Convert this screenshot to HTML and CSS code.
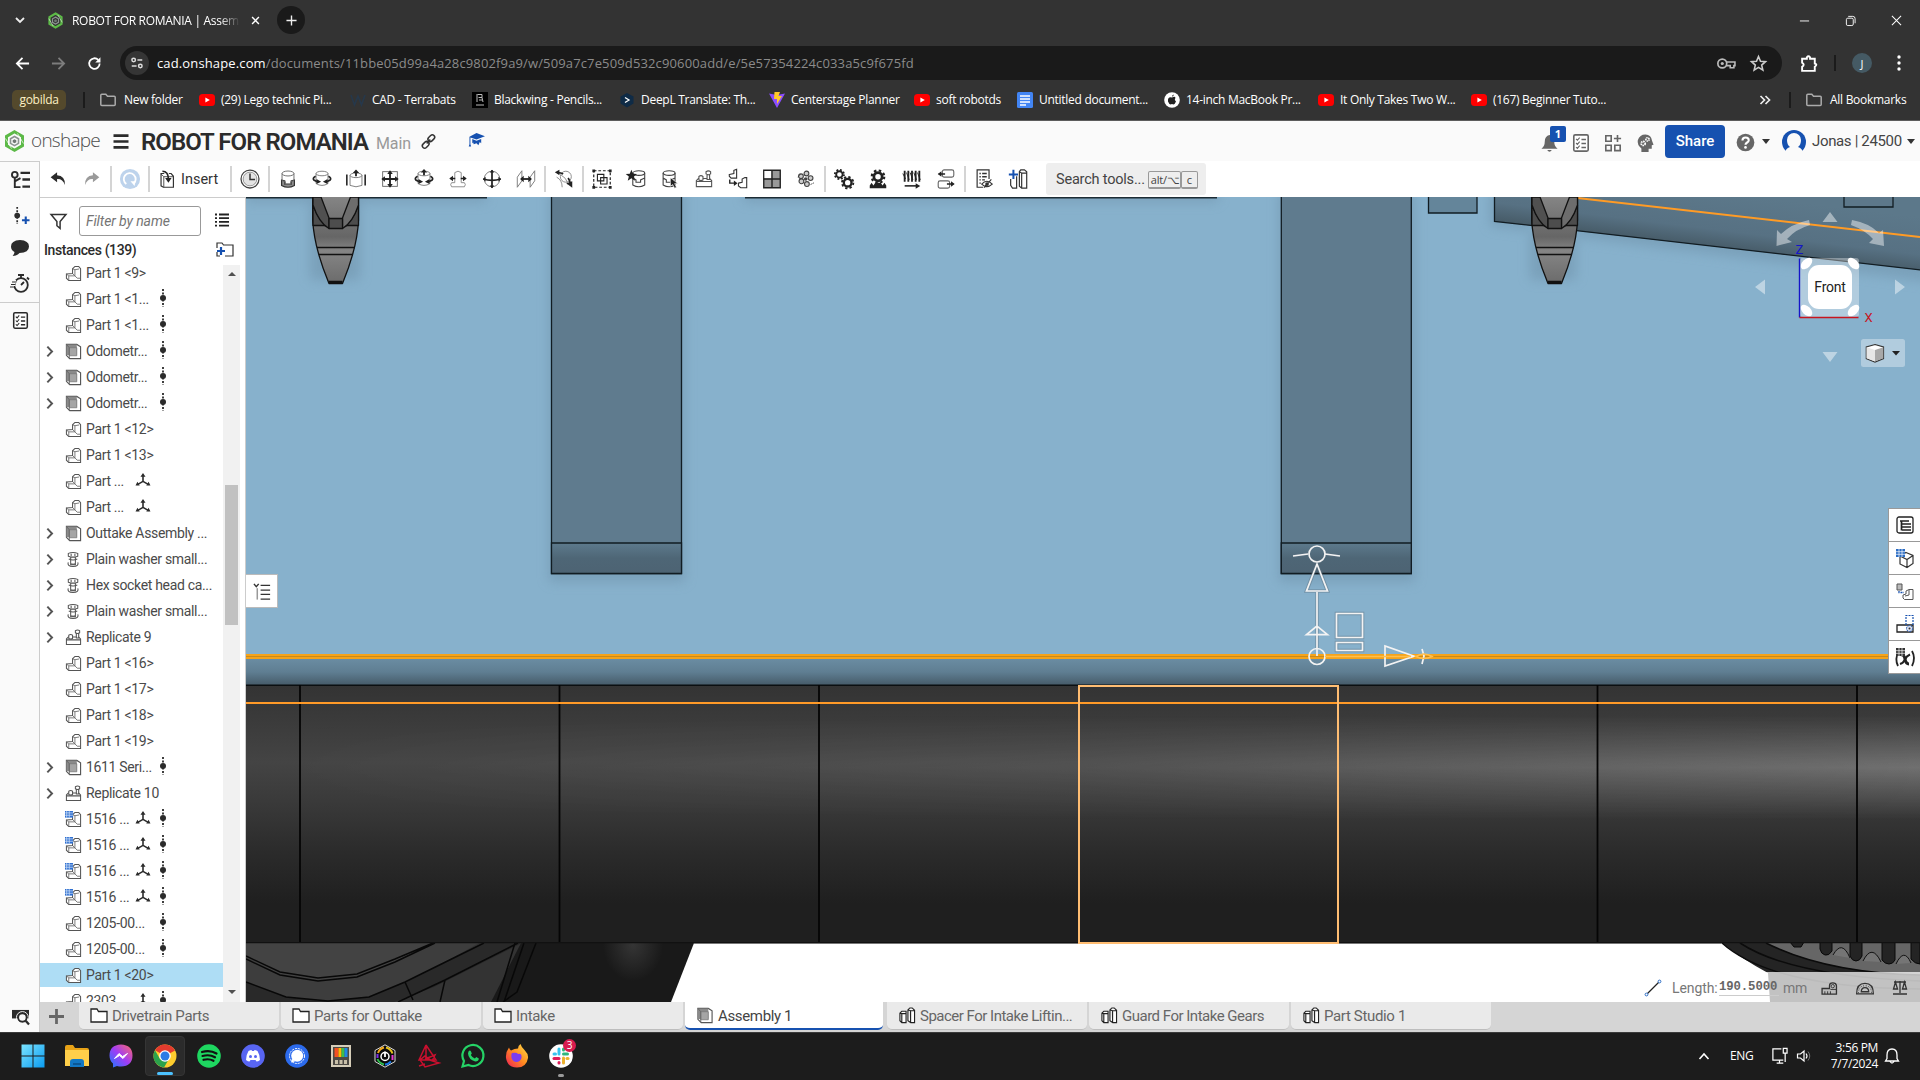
FILE: index.html
```html
<!DOCTYPE html>
<html lang="en">
<head>
<meta charset="utf-8">
<title>ROBOT FOR ROMANIA | Assembly 1</title>
<link rel="stylesheet" href="styles.css">
</head>
<body>
<svg class="defs" aria-hidden="true">
  <linearGradient id="gTube" x1="0" y1="0" x2="0" y2="1"><stop offset="0" stop-color="#333"/><stop offset=".3" stop-color="#444"/><stop offset=".45" stop-color="#3a3a3a"/><stop offset=".65" stop-color="#2b2b2b"/><stop offset=".85" stop-color="#1f1f1f"/><stop offset="1" stop-color="#1f1f1f"/></linearGradient>
  <linearGradient id="gShineY" x1="0" y1="0" x2="0" y2="1"><stop offset="0" stop-color="#fff" stop-opacity="0"/><stop offset=".5" stop-color="#fff" stop-opacity=".24"/><stop offset="1" stop-color="#fff" stop-opacity="0"/></linearGradient>
  <linearGradient id="gShineX" x1="0" y1="0" x2="1" y2="0"><stop offset="0" stop-color="#000"/><stop offset=".5" stop-color="#555"/><stop offset="1" stop-color="#fff"/></linearGradient>
  <linearGradient id="gRail" x1="0" y1="0" x2="0" y2="1"><stop offset="0" stop-color="#6a8ca2"/><stop offset=".5" stop-color="#5f7e92"/><stop offset="1" stop-color="#465b69"/></linearGradient>
  <linearGradient id="gFoot" x1="0" y1="0" x2="0" y2="1"><stop offset="0" stop-color="#5d7a8d"/><stop offset=".5" stop-color="#4e6676"/><stop offset="1" stop-color="#4d6373"/></linearGradient>
  <linearGradient id="gHook" x1="0" y1="0" x2="0" y2="1"><stop offset="0" stop-color="#8a8a8a"/><stop offset=".5" stop-color="#666"/><stop offset=".65" stop-color="#858585"/><stop offset="1" stop-color="#6b6b6b"/></linearGradient>
  <linearGradient id="gBeam" gradientUnits="userSpaceOnUse" x1="1700" y1="190" x2="1693" y2="247"><stop offset="0" stop-color="#5c788a"/><stop offset=".65" stop-color="#577183"/><stop offset="1" stop-color="#455965"/></linearGradient>
  <radialGradient id="gWheel"><stop offset="0" stop-color="#353535"/><stop offset="1" stop-color="#353535" stop-opacity="0"/></radialGradient>
  <linearGradient id="gMsg" x1="0" y1="1" x2="1" y2="0"><stop offset="0" stop-color="#1a7bff"/><stop offset=".5" stop-color="#a03cf5"/><stop offset="1" stop-color="#ff6a6a"/></linearGradient>
  <linearGradient id="gFox" x1="1" y1="0" x2="0" y2="1"><stop offset="0" stop-color="#ffe14a"/><stop offset=".5" stop-color="#ff8a1f"/><stop offset="1" stop-color="#f0195a"/></linearGradient>
  <linearGradient id="gWin" x1="0" y1="0" x2="1" y2="1"><stop offset="0" stop-color="#7be4ff"/><stop offset="1" stop-color="#0a9bf0"/></linearGradient>
  <filter id="soft" x="-20%" y="-20%" width="140%" height="140%"><feGaussianBlur stdDeviation="6"/></filter>
  <mask id="mShine"><rect x="246" y="700" width="1674" height="150" fill="url(#gShineX)"/></mask>

  <symbol id="yt" viewBox="0 0 16 16"><rect y="2" width="16" height="12" rx="3.5" fill="#f00"/><path d="M6.4 5.4v5.2L10.8 8z" fill="#fff"/></symbol>
  <symbol id="fold" viewBox="0 0 16 16"><path d="M.8 3.3q0-1 1-1h4l1.7 2h6.7q1 0 1 1v7.2q0 1-1 1H1.800q-1 0-1-1z" fill="none" stroke="#ababab" stroke-width="1.5"/></symbol>
  <symbol id="oshape" viewBox="0 0 20 22"><path d="M10 1.800 18 6.400v9.200L10 20.200 2 15.600V6.400z" fill="none" stroke="#5cb947" stroke-width="3"/><path d="M10 6.500 14 8.800v4.600L10 15.700 6 13.400V8.800z" fill="none" stroke="#8b9490" stroke-width="1.600"/><path d="M10 9.300l1.800 1v2l-1.800 1-1.800-1v-2z" fill="#6f7774"/><path d="M13 3.500l6 10M7 18.500 1 8.500" stroke="#fff" stroke-width=".7"/></symbol>

  <symbol id="part" viewBox="0 0 18 18"><path d="M1.500 9.500 8 9V4l2.500-2.500h4L16.500 4v12.500H4L1.500 14z" fill="#fff" stroke="#555" stroke-width="1.100"/><path d="M8 4l2.500 1V11.500H4v5M4 11.500 1.500 9.500M10.500 5l4.500-.800M10.500 11.500 13 14h3.500M8 9l2.500 2.500" fill="none" stroke="#666" stroke-width=".9"/></symbol>
  <symbol id="asm" viewBox="0 0 18 18"><path d="M1.500 1.500h11L16.500 4v12.500H5L1.500 13z" fill="#fff" stroke="#555" stroke-width="1.200"/><path d="M1.500 1.500h11v11H5.500L1.500 13z" fill="#8a8a8a"/><path d="M4.500 5h8v8.500h-8z" fill="#a5a5a5" stroke="#777" stroke-width=".8"/><path d="M1.500 1.500 4.500 5v11" fill="none" stroke="#666"/></symbol>
  <symbol id="bolt" viewBox="0 0 18 18"><g fill="#fff" stroke="#555" stroke-width="1.100"><path d="M3.500 2.500q5-2 10 0v3q-5 2-10 0zM6 6.500v8h5v-8M3.500 12q-1.500 4 5 4.500 6.500-.500 5-4.500"/><path d="M4 8.500q4.500 2 9 0M6.500 13.500q2 1 4 0M6.500 3v2.500M10.500 3v2.500" fill="none"/></g></symbol>
  <symbol id="rep" viewBox="0 0 18 18"><g fill="#fff" stroke="#555" stroke-width="1.100"><path d="M1.500 10.500 3.500 8.500h11l2 2v6h-15zM1.500 11.500h15"/><path d="M4 10V6.500q2-1.500 4 0V10q-2 1-4 0zM11 4v-2.200q2.300-1.600 4.500 0V4q-2.200 1.600-4.500 0zM12 5v4.500h2.500V5"/></g></symbol>
  <symbol id="gpart" viewBox="0 0 18 18"><use href="#part"/><rect x="-1" y="-.5" width="9.500" height="7.500" fill="#2f6fd0"/><path d="M1.800 0v7M4.500 0v7M0 2h8.500M0 4.500h8.500" stroke="#cfe0f8" stroke-width=".8"/></symbol>
  <symbol id="chev" viewBox="0 0 9 14"><path d="M1.500 1.500 6.800 7l-5.300 5.500" fill="none" stroke="#555" stroke-width="2.200"/></symbol>
  <symbol id="dots" viewBox="0 0 8 18"><path d="M4 0v18" stroke="#2b2b2b" stroke-width="1.800" stroke-dasharray="2 1.500"/><circle cx="4" cy="9" r="3" fill="#2b2b2b"/></symbol>
  <symbol id="tri" viewBox="0 0 16 15"><path d="M8 2v7M8 9l-6 3.500M8 9l6 3.500" stroke="#2b2b2b" stroke-width="1.700"/><path d="M8 0l2.700 4H5.300zM0 13.500l2-4 2.500 4zM16 13.500l-2-4-2.500 4z" fill="#2b2b2b"/></symbol>
  <symbol id="tfold" viewBox="0 0 18 16"><path d="M1 14.500V1.500h6l1.500 2.500H17v10.500z" fill="#fff" stroke="#222" stroke-width="1.300"/></symbol>
  <symbol id="studio" viewBox="0 0 18 18"><g fill="#fff" stroke="#222" stroke-width="1.200"><path d="M1.500 6.500 3.500 4.500h4.500v12H3.500l-2-2zM3.500 16.500V7l-2-.5M3.500 7h4.500"/><path d="M10 3 12 1h2.500L17 3.500v13h-4l-3-2zM12.800 16V4L10 3M12.800 4H17"/></g></symbol>

  <symbol id="i-undo" viewBox="0 0 24 24"><path d="M11 4.500 4 10l7 5.500V12q6-.5 8.500 6.500Q20 8.500 11 8z" fill="#2b2b2b"/></symbol>
  <symbol id="i-redo" viewBox="0 0 24 24"><path d="M13 4.500 20 10l-7 5.500V12q-6-.5-8.500 6.500Q4 8.500 13 8z" fill="#9a9a9a"/></symbol>
  <symbol id="i-upd" viewBox="0 0 24 24"><circle cx="12" cy="12" r="11" fill="#bdd3ec"/><path d="M8 17.500A6.500 6.500 0 1 1 16 17" fill="none" stroke="#fff" stroke-width="2"/><path d="M12.500 14.500H18l-1 5z" fill="#fff"/></symbol>
  <symbol id="i-ins" viewBox="0 0 24 24"><path d="M9 6H5.500v13.500L8 21h11V9l-2.500-3H14" fill="#fff" stroke="#333" stroke-width="1.300"/><path d="M5.500 6.500 8.500 9.500V21M8.500 9.500H19" fill="none" stroke="#444"/><path d="M7 3.500q6.500 0 6.500 8.500" fill="none" stroke="#222" stroke-width="1.800"/><path d="M10 11h7l-3.500 5z" fill="#222"/></symbol>
  <symbol id="i-clock" viewBox="0 0 24 24"><circle cx="12" cy="12" r="9.800" fill="#fff" stroke="#444" stroke-width="1.400"/><circle cx="12" cy="12" r="7.500" fill="#e4e4e4" stroke="#777" stroke-width=".8"/><path d="M12 6v6.500h5.500" fill="none" stroke="#333" stroke-width="1.600"/></symbol>
  <symbol id="i-fast" viewBox="0 0 24 24"><path d="M5 13v6q7 4 14 0v-6l-3.500 1v3.500h-7V14z" fill="#8d8d8d" stroke="#333" stroke-width="1.300"/><ellipse cx="12" cy="6" rx="6.500" ry="2.700" fill="#fff" stroke="#666"/><path d="M5.500 6v7.500L9 15v3h6v-3l3.500-1.500V6" fill="none" stroke="#666"/></symbol>
  <symbol id="i-rev" viewBox="0 0 24 24"><ellipse cx="12" cy="6" rx="6.500" ry="2.500" fill="#fff" stroke="#777"/><path d="M5.500 6v11q6.500 4 13 0V6" fill="none" stroke="#777"/><path d="M5 9Q1 11 3.500 13.500L7 15M19 9q4 2 1.500 4.500L17 15" fill="none" stroke="#222" stroke-width="1.900"/><path d="M6 12l5 3-5 2.500zM18 12l-5 3 5 2.500z" fill="#222"/></symbol>
  <symbol id="i-sli" viewBox="0 0 24 24"><ellipse cx="12" cy="8" rx="6.500" ry="2.500" fill="#fff" stroke="#777"/><path d="M5.500 8v11q6.500 3 13 0V8" fill="none" stroke="#777"/><path d="M2 7v12M22 7v12" stroke="#222" stroke-width="1.700"/><path d="M12 9V3" stroke="#222" stroke-width="2"/><path d="M8.500 5.500 12 1.500l3.500 4z" fill="#222"/></symbol>
  <symbol id="i-pla" viewBox="0 0 24 24"><rect x="4" y="4" width="16" height="16" fill="#fff" stroke="#666"/><path d="M12 4v16M4 12h16" stroke="#222" stroke-width="2"/><path d="M9 6.500 12 2.500l3 4zM9 17.500l3 4 3-4zM6.500 9 2.500 12l4 3zM17.500 9l4 3-4 3z" fill="#222"/></symbol>
  <symbol id="i-cyl" viewBox="0 0 24 24"><use href="#i-rev"/><path d="M12 8V3" stroke="#222" stroke-width="2"/><path d="M8.500 5 12 1l3.500 4z" fill="#222"/></symbol>
  <symbol id="i-pin" viewBox="0 0 24 24"><path d="M8.500 5q3.500-3 7 0v11h3.500q2 2 0 4.500H5q-2-2.500 0-4.500h3.500z" fill="#fff" stroke="#888"/><path d="M4 11.500h16" stroke="#222" stroke-width="1.700" stroke-dasharray="5 6"/><path d="M6.500 8.500 2.500 11.500l4 3zM17.500 8.500l4 3-4 3z" fill="#222"/></symbol>
  <symbol id="i-ball" viewBox="0 0 24 24"><circle cx="12" cy="12" r="8.500" fill="#fff" stroke="#777"/><path d="M12 2.500v19M2.500 12q9.500 3 19 0" fill="none" stroke="#222" stroke-width="1.900"/><path d="M9.500 5 12 2l2.500 3zM9.500 19l2.500 3 2.500-3zM5 9.500 2 12l3 3zM19 9.500l3 2.500-3 3z" fill="#222"/></symbol>
  <symbol id="i-par" viewBox="0 0 24 24"><path d="M2.500 21V10l5-7v11zM16.500 21V10l5-7v11z" fill="#fff" stroke="#777"/><path d="M7 12h10" stroke="#222" stroke-width="2"/><path d="M9.500 8.500 5.500 12l4 3.500zM14.500 8.500l4 3.500-4 3.500z" fill="#222"/></symbol>
  <symbol id="i-tan" viewBox="0 0 24 24"><circle cx="14" cy="9.500" r="6" fill="#fff" stroke="#888"/><path d="M4 10q6 3 6 11M9 8q6 3 7 10" fill="none" stroke="#888"/><path d="M5 5q4 0 6 1.500M16.500 11q2 3 2.500 6" fill="none" stroke="#222" stroke-width="1.900"/><path d="M7 2 2 4.500 7 8zM14.500 16.500l6.500 5v-7z" fill="#222"/></symbol>
  <symbol id="i-grp" viewBox="0 0 24 24"><rect x="3" y="3" width="18" height="18" fill="none" stroke="#222" stroke-width="1.300" stroke-dasharray="3 2"/><path d="M1.500 1.500h3v3h-3zM19.500 1.500h3v3h-3zM1.500 19.500h3v3h-3zM19.500 19.500h3v3h-3z" fill="#222"/><path d="M7 7h7v7H7zM10.500 10.500h7v7h-7z" fill="none" stroke="#222" stroke-width="1.200"/></symbol>
  <symbol id="i-db" viewBox="0 0 24 24"><ellipse cx="12" cy="5.500" rx="6.500" ry="2.500" fill="#fff" stroke="#444" stroke-width="1.200"/><path d="M5.500 5.500v13q6.500 4 13 0v-13M5.500 11l3.500 2v2.500h5V13l4.500-2" fill="none" stroke="#444" stroke-width="1.200"/></symbol>
  <symbol id="i-star" viewBox="0 0 24 24"><use href="#i-db" x="3"/><path d="M7 2l1.800 4.300 4.400.2-3.400 2.900 1.200 4.400L7 11.300l-4 2.500 1.200-4.400L.8 6.500l4.400-.2z" fill="#222"/></symbol>
  <symbol id="i-dbc" viewBox="0 0 24 24"><use href="#i-db" x="-1"/><path d="M12.500 10.500v9.500l2.500-2 2 4 2-1-2-4h3.500z" fill="#222" stroke="#fff" stroke-width=".6"/></symbol>
  <symbol id="i-rep" viewBox="0 0 24 24"><use href="#rep" x="2" y="2" width="20" height="20"/></symbol>
  <symbol id="i-inst" viewBox="0 0 24 24"><path d="M2.500 7l5-1V2.500l3-1v9.500H4.500L2.500 9zM12.500 16.500l4-1V12l3-1.500h2v11H15l-2.500-2z" fill="#fff" stroke="#333" stroke-width="1.200"/><path d="M3 12.500v4h5" fill="none" stroke="#222" stroke-width="1.500"/><path d="M7.500 13.500l4 3-4 3z" fill="#222"/></symbol>
  <symbol id="i-pat" viewBox="0 0 24 24"><path d="M3 2.500h18v19H3z" fill="#999" stroke="#222" stroke-width="1.500"/><path d="M3.800 3.300h7.500v8H3.800z" fill="#fff"/><path d="M12 2.500v19M3 12h18" stroke="#222" stroke-width="1.500"/></symbol>
  <symbol id="i-circ" viewBox="0 0 24 24"><g fill="#ccc" stroke="#444" stroke-width="1.200"><circle cx="6.500" cy="9" r="2.600"/><circle cx="12.500" cy="6" r="2.600"/><circle cx="7" cy="14.500" r="2.600"/><circle cx="13" cy="17.500" r="2.600"/><circle cx="17" cy="11" r="2.600"/></g><circle cx="11.700" cy="12" r="2" fill="#444"/><path d="M17 18l4-2M3 10l3-3" stroke="#333" stroke-dasharray="1.500 1"/></symbol>
  <symbol id="i-gear" viewBox="0 0 24 24"><circle cx="7" cy="7" r="3.500" fill="none" stroke="#222" stroke-width="2"/><circle cx="7" cy="7" r="5" fill="none" stroke="#222" stroke-width="2" stroke-dasharray="2 1.927"/><circle cx="16" cy="16" r="4.200" fill="none" stroke="#222" stroke-width="2.600"/><circle cx="16" cy="16" r="6.200" fill="none" stroke="#222" stroke-width="2" stroke-dasharray="2.500 2.370"/></symbol>
  <symbol id="i-rack" viewBox="0 0 24 24"><circle cx="12" cy="9.500" r="4.500" fill="none" stroke="#222" stroke-width="3"/><circle cx="12" cy="9.500" r="6.800" fill="none" stroke="#222" stroke-width="2.400" stroke-dasharray="2.700 2.640"/><path d="M3 22v-3l2-3 2 3 2-3h6l2 3 2-3 2 3v3z" fill="#222"/></symbol>
  <symbol id="i-screw" viewBox="0 0 24 24"><path d="M4 3v12M8 3v12M12 3v12M16 3v12M20 3v12" stroke="#222" stroke-width="2"/><path d="M2 6l3 6M6 5l3 8M10 5l3 8M14 5l3 8M18 5l3 8" stroke="#222"/><path d="M4 19.500h13" stroke="#222" stroke-width="1.700"/><path d="M16 16.500l5 3-5 3z" fill="#222"/></symbol>
  <symbol id="i-lin" viewBox="0 0 24 24"><g fill="#fff" stroke="#666" stroke-width="1.200"><rect x="8" y="2" width="12.500" height="8" rx="2"/><rect x="3.500" y="14" width="12.500" height="8" rx="2"/></g><path d="M4 6.500h7M13 17.500h7" stroke="#222" stroke-width="1.700"/><path d="M7 3.500 3 6.500l4 3zM17.500 14.500l4 3-4 3z" fill="#222"/></symbol>
  <symbol id="i-hide" viewBox="0 0 24 24"><path d="M17.500 12V2h-13v19H11" fill="#fff" stroke="#333" stroke-width="1.300"/><path d="M7 6h1.500M10 6h5M7 9.500h1.500M10 9.500h5M7 13h1.500M10 13h3M7 16.500h1.500" stroke="#333" stroke-width="1.500"/><path d="M9.500 17.500q5.500-6 11.500 0-6 5.500-11.500 0zM12 21.500l8-9" fill="#fff" stroke="#333" stroke-width="1.200"/><circle cx="15.300" cy="17.500" r="2" fill="#333"/></symbol>
  <symbol id="i-addst" viewBox="0 0 24 24"><path d="M4 12v7l2 3h4.500V9M13.500 4 15 2h4l2.500 2v18H16l-2.500-2zM16 22V5.500L13.500 4M16 5.500h5.500" fill="#fff" stroke="#333" stroke-width="1.300"/><path d="M7 2v10M2 7h10" stroke="#1651b0" stroke-width="2.200"/></symbol>
  <symbol id="i-list" viewBox="0 0 20 22"><rect x="2" y="2" width="16" height="18" rx="1.500" fill="#fff" stroke="currentColor" stroke-width="1.800"/><path d="M4.500 6.500 6 8l2.500-3M4.500 11 6 12.500 8.500 9.500M4.500 15.500 6 17l2.500-3" fill="none" stroke="currentColor" stroke-width="1.200"/><path d="M10.500 7h5M10.500 11.500h5M10.500 16h5" stroke="currentColor" stroke-width="1.700"/></symbol>
</svg>

<div class="screen">
  <header class="chrome">
    <div class="tabstrip">
      <svg class="caretdown" viewBox="0 0 10 10"><path d="M1 3l4 4 4-4" fill="none" stroke="#eee" stroke-width="1.800"/></svg>
      <svg class="favicon"><use href="#oshape"/></svg>
      <span class="tabtitle">ROBOT FOR ROMANIA | Assembly 1</span>
      <svg class="x" viewBox="0 0 10 10"><path d="M1.200 1.200l7.600 7.600M8.800 1.200 1.200 8.800" stroke="#fff" stroke-width="1.600"/></svg>
      <span class="newtab"><svg viewBox="0 0 12 12"><path d="M6 .5v11M.5 6h11" stroke="#eee" stroke-width="1.500"/></svg></span>
      <span class="winbtns">
        <svg viewBox="0 0 12 12"><path d="M1 6.500h10" stroke="#fff"/></svg>
        <svg viewBox="0 0 12 12"><path d="M1.500 5q0-1.500 1.500-1.500h4.500Q9 3.500 9 5v5q0 1.500-1.500 1.500H3Q1.500 11.500 1.500 10zM3.500 1.500h5q2.500 0 2.500 2.500v5" fill="none" stroke="#fff"/></svg>
        <svg viewBox="0 0 12 12"><path d="M1 1l10 10M11 1 1 11" stroke="#fff" stroke-width="1.100"/></svg>
      </span>
    </div>
    <div class="addressrow">
      <svg class="nav" viewBox="0 0 16 16"><path d="M15 8H2.500M8 2 2 8l6 6" fill="none" stroke="#fff" stroke-width="1.900"/></svg>
      <svg class="nav" viewBox="0 0 16 16"><path d="M1 8h12.500M8 2l6 6-6 6" fill="none" stroke="#7d7d7d" stroke-width="1.900"/></svg>
      <svg class="nav" viewBox="0 0 16 16"><path d="M13.500 8A5.600 5.600 0 1 1 12 4.200" fill="none" stroke="#fff" stroke-width="1.900"/><path d="M14.300 1.200v5.600H8.800z" fill="#fff"/></svg>
      <div class="omnibox">
        <span class="site"><svg viewBox="0 0 16 16"><g fill="none" stroke="#ddd" stroke-width="1.700"><circle cx="4.200" cy="4.500" r="2"/><circle cx="11.800" cy="11.500" r="2"/><path d="M8.500 4.500H14M2 11.500h5.500"/></g></svg></span>
        <span class="url"><b>cad.onshape.com</b>/documents/11bbe05d99a4a28c9802f9a9/w/509a7c7e509d532c90600add/e/5e57354224c033a5c9f675fd</span>
        <svg class="key" viewBox="0 0 18 12"><circle cx="5" cy="6" r="4.200" fill="none" stroke="#bbb" stroke-width="1.600"/><circle cx="5" cy="6" r="1.500" fill="#bbb"/><path d="M9 4.500h8v3.500h-1v2h-3.500V8H9" fill="none" stroke="#bbb" stroke-width="1.500"/></svg>
        <svg class="bstar" viewBox="0 0 16 16"><path d="M8 1.500l1.900 4.400 4.700.4-3.600 3.200 1.100 4.700L8 11.700l-4.100 2.500L5 9.500 1.400 6.300l4.700-.4z" fill="none" stroke="#ccc" stroke-width="1.500"/></svg>
      </div>
      <svg class="ext" viewBox="0 0 18 18"><path d="M2 4.500h4.500V3.200q1.500-2 3 0v1.300H14V9q3 1 0 3v4H2v-3.800q3-2 0-4z" fill="none" stroke="#fff" stroke-width="1.800"/></svg>
      <i class="vsep"></i>
      <span class="profile">J</span>
      <svg class="kebab" viewBox="0 0 4 16"><circle cx="2" cy="2" r="1.700" fill="#fff"/><circle cx="2" cy="8" r="1.700" fill="#fff"/><circle cx="2" cy="14" r="1.700" fill="#fff"/></svg>
    </div>
    <nav class="bookmarks">
      <span class="chip">gobilda</span>
      <i class="vsep"></i>
      <span class="bm"><svg><use href="#fold"/></svg><em>New folder</em></span>
      <span class="bm"><svg><use href="#yt"/></svg>(29) Lego technic Pi...</span>
      <span class="bm"><svg viewBox="0 0 16 16"><path d="M1 3l3.500 10L8 4l3.500 9L15 3" fill="none" stroke="#26384b" stroke-width="1.600"/></svg>CAD - Terrabats</span>
      <span class="bm"><svg viewBox="0 0 16 16"><path d="M0 0h16v16H0z" fill="#000"/><path d="M5 2v8M5.500 2.500H10v3H6.500M10 5.500l1 4.500M4 13h8M7 8h3" stroke="#bbb" fill="none"/></svg>Blackwing - Pencils...</span>
      <span class="bm"><svg viewBox="0 0 16 16"><path d="M8 1l6.500 3.500v7L8 15.500 1.500 11.500v-7z" fill="#0f2b46"/><path d="M6 5.500l4 2.500-4 2.500" fill="none" stroke="#fff" stroke-width="1.300"/></svg>DeepL Translate: Th...</span>
      <span class="bm"><svg viewBox="0 0 16 16"><path d="M0 1.500 8 3l8-1.500L8 16z" fill="#8a4dff"/><path d="M5.500 0 11 0 9.500 4H13L8 12V7H5z" fill="#ffc928"/></svg>Centerstage Planner</span>
      <span class="bm"><svg><use href="#yt"/></svg>soft robotds</span>
      <span class="bm"><svg viewBox="0 0 16 16"><rect width="16" height="16" rx="1.500" fill="#4285f4"/><path d="M3 4h10M3 7h10M3 10h10M3 13h6" stroke="#fff" stroke-width="1.500"/></svg>Untitled document...</span>
      <span class="bm"><svg viewBox="0 0 16 16"><circle cx="8" cy="8" r="7.800" fill="#fff"/><path d="M8 5.500q3-1.500 3.500.5-1.500 1.500.5 3.500-1.500 4-4 2.500-2.500 1.500-4-2.500-.5-5 4-4zM8 4.800Q8 3 9.800 2.600 9.800 4.600 8 4.800z" fill="#222"/></svg>14-inch MacBook Pr...</span>
      <span class="bm"><svg><use href="#yt"/></svg>It Only Takes Two W...</span>
      <span class="bm"><svg><use href="#yt"/></svg>(167) Beginner Tuto...</span>
      <svg class="more" viewBox="0 0 12 10"><path d="M1.500 1l4 4-4 4M6.500 1l4 4-4 4" fill="none" stroke="#eee" stroke-width="1.700"/></svg>
      <i class="vsep"></i>
      <span class="bm"><svg><use href="#fold"/></svg><em>All Bookmarks</em></span>
    </nav>
  </header>

  <div class="docbar">
    <svg class="logo"><use href="#oshape"/></svg>
    <span class="brand">onshape</span>
    <svg class="burger" viewBox="0 0 16 16"><path d="M0 1.700h16M0 8h16M0 14.300h16" stroke="#2b2b2b" stroke-width="2.800"/></svg>
    <h1>ROBOT FOR ROMANIA</h1>
    <span class="branch">Main</span>
    <svg class="link" viewBox="0 0 16 16"><g fill="none" stroke="#333" stroke-width="1.600"><rect x="7" y="2" width="8" height="5" rx="2.500" transform="rotate(-45 11 4.500)"/><rect x="1" y="9" width="8" height="5" rx="2.500" transform="rotate(-45 5 11.500)"/><path d="M6 10l4-4"/></g></svg>
    <svg class="cap" viewBox="0 0 18 16"><path d="M9 0l9 3.500L9 7 2.500 4.700V12l.8 2.500H.7L1.500 12V4z" fill="#1651b0"/><path d="M4.500 6.500 9 8.300l5-2V11l-1.500-1.500L11 13l-2-2-3 1-.5-2-1 1z" fill="#1651b0"/></svg>
    <div class="docright">
      <span class="bell"><svg viewBox="0 0 18 20"><path d="M9 1.500q5 1 5 7 0 5 3.500 7.500H.5Q4 13.500 4 8.500q0-6 5-7zM6.500 17.500h5q-2.500 3.500-5 0z" fill="#666"/></svg><b>1</b></span>
      <svg class="dico"><use href="#i-list"/></svg>
      <svg class="dico" viewBox="0 0 20 22"><path d="M2 3h6v6H2zM2 13.500h6v6H2zM12 13.500h6v6h-6zM15 2v8M11 6h8" fill="none" stroke="#666" stroke-width="1.800"/></svg>
      <svg class="dico" viewBox="0 0 20 22"><path d="M6 21v-4Q1 13 2 8q2-6.500 8.500-6.500T18 9l1.500 4-2 .5v4h-3.500V21z" fill="#666"/><circle cx="8" cy="11.500" r="2.200" fill="none" stroke="#fff" stroke-width="2" stroke-dasharray="1.600 .7"/><circle cx="12.800" cy="7" r="1.800" fill="none" stroke="#fff" stroke-width="1.800" stroke-dasharray="1.500 .6"/></svg>
      <button class="share">Share</button>
      <svg class="help" viewBox="0 0 20 20"><circle cx="10" cy="10" r="9.300" fill="#666"/><path d="M6.800 7.800q0-3 3.300-3t3.300 2.700q0 1.500-1.700 2.500T10 12.300" fill="none" stroke="#fff" stroke-width="2.200"/><circle cx="10" cy="15.200" r="1.400" fill="#fff"/></svg>
      <i class="caret"></i>
      <svg class="avatar" viewBox="0 0 24 24"><circle cx="12" cy="12" r="12" fill="#1651b0"/><path d="M5 10a7 7 0 0 1 14 0q0 5-3 7 5 1.500 5 7H3q0-5.500 5-7-3-2-3-7z" fill="#fafafa"/></svg>
      <span class="user">Jonas | 24500</span>
      <i class="caret"></i>
    </div>
  </div>

  <div class="work">
    <aside class="rail">
      <svg class="r1" viewBox="0 0 22 20"><path d="M5 8v10h6M5 12l6-3.500" fill="none" stroke="#2b2b2b" stroke-width="2"/><circle cx="5" cy="5" r="3" fill="none" stroke="#2b2b2b" stroke-width="2"/><path d="M11 3h10M13 10h8M13 17.500h8" stroke="#2b2b2b" stroke-width="2.400"/></svg>
      <svg class="r2" viewBox="0 0 20 20"><path d="M6 1v18" stroke="#2b2b2b" stroke-width="1.800" stroke-dasharray="2 1.500"/><circle cx="6" cy="10" r="3" fill="#2b2b2b"/><path d="M15 11v8M11 15h8" stroke="#1651b0" stroke-width="2.200"/></svg>
      <svg class="r3" viewBox="0 0 20 18"><path d="M10 1q9 .5 9 6.500T9.500 14Q7 17 2.500 17q2-2 2-4Q1 11 1 7.500 1 1.500 10 1z" fill="#2b2b2b"/></svg>
      <svg class="r4" viewBox="0 0 20 20"><circle cx="11" cy="12" r="6.800" fill="none" stroke="#2b2b2b" stroke-width="1.800"/><path d="M8 2h6M11 2v3M17 4.500l2 2M11 12l3-3" stroke="#2b2b2b" stroke-width="1.800"/><path d="M0 8.500h6M-.5 11.500h5.500M-1 14.500h5" stroke="#fafafa" stroke-width="3"/><path d="M2 9h4.500M1 11.500h4.500M0 14h4.500" stroke="#2b2b2b" stroke-width="1.200"/></svg>
      <i class="rule"></i>
      <svg class="r5"><use href="#i-list"/></svg>
      <svg class="r6" viewBox="0 0 20 18"><path d="M1 1h18v9H1z" fill="#2b2b2b"/><circle cx="12" cy="9" r="4.500" fill="#fafafa" stroke="#2b2b2b" stroke-width="2"/><circle cx="12" cy="9" r="6.300" fill="none" stroke="#fafafa" stroke-width="1"/><path d="M15.500 12.500l3.500 4" stroke="#2b2b2b" stroke-width="2.400"/></svg>
    </aside>
    <div class="main">
      <div class="toolbar">
        <svg><use href="#i-undo"/></svg><svg><use href="#i-redo"/></svg><i></i>
        <svg><use href="#i-upd"/></svg><i></i>
        <span class="insert"><svg><use href="#i-ins"/></svg>Insert</span><i></i>
        <svg><use href="#i-clock"/></svg><i></i>
        <svg><use href="#i-fast"/></svg><svg><use href="#i-rev"/></svg><svg><use href="#i-sli"/></svg><svg><use href="#i-pla"/></svg><svg><use href="#i-cyl"/></svg><svg><use href="#i-pin"/></svg><svg><use href="#i-ball"/></svg><svg><use href="#i-par"/></svg><i></i>
        <svg><use href="#i-tan"/></svg><i></i>
        <svg><use href="#i-grp"/></svg><svg><use href="#i-star"/></svg><svg><use href="#i-dbc"/></svg><svg><use href="#i-rep"/></svg><svg><use href="#i-inst"/></svg><svg><use href="#i-pat"/></svg><svg><use href="#i-circ"/></svg><i></i>
        <svg><use href="#i-gear"/></svg><svg><use href="#i-rack"/></svg><svg><use href="#i-screw"/></svg><svg><use href="#i-lin"/></svg><i></i>
        <svg><use href="#i-hide"/></svg><svg><use href="#i-addst"/></svg>
        <span class="search">Search tools...<kbd>alt/⌥</kbd><kbd>c</kbd></span>
      </div>
      <div class="body">
        <section class="panel">
          <div class="filter">
            <svg class="funnel" viewBox="0 0 16 16"><path d="M1 1.500h14L9.500 8v6.500L6.500 12V8z" fill="#fff" stroke="#333" stroke-width="1.400"/></svg>
            <span class="input">Filter by name</span>
            <svg class="flist" viewBox="0 0 14 14"><path d="M0 1.500h2M4 1.500h10M0 5.200h2M4 5.200h10M0 8.900h2M4 8.900h10M0 12.600h2M4 12.600h10" stroke="#222" stroke-width="1.800"/></svg>
          </div>
          <div class="insthead"><span>Instances (139)</span><svg viewBox="0 0 18 15"><path d="M1 6V1h5l1.500 2H17v11H9M1 10v4h3" fill="none" stroke="#333" stroke-width="1.200"/><path d="M5 5v8M1 9h8" stroke="#1651b0" stroke-width="2.200"/></svg></div>
          <div class="treewrap">
            <ul class="tree">
              <li><b></b><svg><use href="#part"/></svg>Part 1 &lt;9&gt;</li>
              <li><b></b><svg><use href="#part"/></svg><span class="name">Part 1 &lt;1...</span><svg class="d"><use href="#dots"/></svg></li>
              <li><b></b><svg><use href="#part"/></svg><span class="name">Part 1 &lt;1...</span><svg class="d"><use href="#dots"/></svg></li>
              <li><b><svg><use href="#chev"/></svg></b><svg><use href="#asm"/></svg><span class="name">Odometr...</span><svg class="d"><use href="#dots"/></svg></li>
              <li><b><svg><use href="#chev"/></svg></b><svg><use href="#asm"/></svg><span class="name">Odometr...</span><svg class="d"><use href="#dots"/></svg></li>
              <li><b><svg><use href="#chev"/></svg></b><svg><use href="#asm"/></svg><span class="name">Odometr...</span><svg class="d"><use href="#dots"/></svg></li>
              <li><b></b><svg><use href="#part"/></svg>Part 1 &lt;12&gt;</li>
              <li><b></b><svg><use href="#part"/></svg>Part 1 &lt;13&gt;</li>
              <li><b></b><svg><use href="#part"/></svg><span class="short">Part ...</span><svg class="t"><use href="#tri"/></svg></li>
              <li><b></b><svg><use href="#part"/></svg><span class="short">Part ...</span><svg class="t"><use href="#tri"/></svg></li>
              <li><b><svg><use href="#chev"/></svg></b><svg><use href="#asm"/></svg>Outtake Assembly ...</li>
              <li><b><svg><use href="#chev"/></svg></b><svg><use href="#bolt"/></svg>Plain washer small...</li>
              <li><b><svg><use href="#chev"/></svg></b><svg><use href="#bolt"/></svg>Hex socket head ca...</li>
              <li><b><svg><use href="#chev"/></svg></b><svg><use href="#bolt"/></svg>Plain washer small...</li>
              <li><b><svg><use href="#chev"/></svg></b><svg><use href="#rep"/></svg>Replicate 9</li>
              <li><b></b><svg><use href="#part"/></svg>Part 1 &lt;16&gt;</li>
              <li><b></b><svg><use href="#part"/></svg>Part 1 &lt;17&gt;</li>
              <li><b></b><svg><use href="#part"/></svg>Part 1 &lt;18&gt;</li>
              <li><b></b><svg><use href="#part"/></svg>Part 1 &lt;19&gt;</li>
              <li><b><svg><use href="#chev"/></svg></b><svg><use href="#asm"/></svg><span class="name">1611 Seri...</span><svg class="d"><use href="#dots"/></svg></li>
              <li><b><svg><use href="#chev"/></svg></b><svg><use href="#rep"/></svg>Replicate 10</li>
              <li><b></b><svg><use href="#gpart"/></svg><span class="short">1516 ...</span><svg class="t"><use href="#tri"/></svg><svg class="d"><use href="#dots"/></svg></li>
              <li><b></b><svg><use href="#gpart"/></svg><span class="short">1516 ...</span><svg class="t"><use href="#tri"/></svg><svg class="d"><use href="#dots"/></svg></li>
              <li><b></b><svg><use href="#gpart"/></svg><span class="short">1516 ...</span><svg class="t"><use href="#tri"/></svg><svg class="d"><use href="#dots"/></svg></li>
              <li><b></b><svg><use href="#gpart"/></svg><span class="short">1516 ...</span><svg class="t"><use href="#tri"/></svg><svg class="d"><use href="#dots"/></svg></li>
              <li><b></b><svg><use href="#part"/></svg><span class="name">1205-00...</span><svg class="d"><use href="#dots"/></svg></li>
              <li><b></b><svg><use href="#part"/></svg><span class="name">1205-00...</span><svg class="d"><use href="#dots"/></svg></li>
              <li class="sel"><b></b><svg><use href="#part"/></svg>Part 1 &lt;20&gt;</li>
              <li><b></b><svg><use href="#part"/></svg><span class="short">2303 ...</span><svg class="t"><use href="#tri"/></svg><svg class="d"><use href="#dots"/></svg></li>
            </ul>
            <div class="scroll"><i class="up"></i><i class="thumb"></i><i class="down"></i></div>
          </div>
        </section>
        <section class="view">
          <svg class="scene" viewBox="246 197 1674 805">
            <rect x="246" y="197" width="1674" height="488" fill="#87b1cc"/>
            <g filter="url(#soft)" fill="#6f93ab" opacity=".55"><path d="M549 190h136v392H549zM1279 190h136v392h-136zM310 190h50v90h-50zM1530 190h46v90h-46zM1490 190v36l440 56v-90zM744 190h474v12H744zM246 190h240v12H246z"/></g>
            <path d="M246 197.500h241M745 197.500h472" stroke="#1c2c35" stroke-width="2"/>
            <g stroke="#111c22" stroke-width="1.300">
              <path d="M551.500 190h130v383.500h-130z" fill="#5f7b8e"/><path d="M551.500 543h130v30.500h-130z" fill="url(#gFoot)"/>
              <path d="M1281.300 190h130v383.500h-130z" fill="#5f7b8e"/><path d="M1281.300 543h130v30.500h-130z" fill="url(#gFoot)"/>
              <path d="M1428.500 190h48.500v23h-48.500z" fill="#64859a"/>
              <path d="M1494.500 190v31.300L1925 270.500V190z" fill="url(#gBeam)"/>
              <path d="M1844 190h49v17h-49z" fill="#5d788a"/>
            </g>
            <path d="M1573 197.500 1920 237" stroke="#ff9b25" stroke-width="2"/>
            <g id="hook" stroke="#111" stroke-width="1.300" stroke-linejoin="round">
              <path d="M312.700 190h45.800v30q-1 27-16 63.500h-13.500q-15-36-16.300-63.500z" fill="url(#gHook)"/>
              <path d="M313 205v20.500h13q-8-7-13-20.500zM358.500 205v20.500h-13q8-7 13-20.500z" fill="#4d4d4d"/>
              <path d="M313 197v8q6 18 16 23.500V218l-8-21z" fill="#505050"/>
              <path d="M358.500 197v8q-6 18-16 23.500V218l8-21z" fill="#6d6d6d"/>
              <path d="M317 247.500h38M319 254.500h34" fill="none"/>
              <path d="M329 218.500h13.500v10H329z" fill="#4d4d4d"/><path d="M329 282h13.500" stroke-width="2.500"/>
            </g>
            <use href="#hook" x="1219"/>
            <path d="M246 659h1674v26H246z" fill="url(#gRail)"/>
            <path d="M246 943h448l-23 59H246z" fill="#191919"/>
            <ellipse cx="633" cy="945" rx="30" ry="36" fill="url(#gWheel)"/>
            <path d="M246 943h275l-30 59H246z" fill="#333"/>
            <path d="M246 943h185q-50 38-90 45-50 0-95-30z" fill="#434343"/>
            <path d="M246 957l34 17 38 6 39-4 38-15 38-18h46l-78 44-33 13-42 3-40-4-40-16z" fill="#3d3d3d"/>
            <path d="M246 982l40 15 40 4 43-4 36-15 79-39h38l-88 44-40 15H246z" fill="#292929"/>
            <path d="M246 956l34 16 38 6 39-4 38-15 38-16M246 959l34 16 38 6 39-4 38-15 40-19M246 982l40 15 42 4 41-4 36-15 79-39M405 982l8 18M398 1002l47-22 73-37M445 980l-5 22M515 943l-18 59M536 943l-19 49-14 10M524 943l-20 59" fill="none" stroke="#080808" stroke-width="1.500"/>
            <path d="M1722 943q20 16 46 30l2 29h150v-59z" fill="#242424"/>
            <path d="M1766 943q60 30 154 32v-32z" fill="#666"/>
            <path d="M1722 943q50 45 198 46M1740 943q50 33 180 38M1766 943q60 30 154 32" fill="none" stroke="#0b0b0b" stroke-width="1.500"/>
            <path d="M1790 942h14l-3 5h-7zM1820 942h12v9q-3 5-7 4t-5-6zM1850 942h12v14q-2 5-6 5t-6-5zM1882 942h13v18q-2 4-6 4t-7-4zM1911 942h9v22q-5 0-9-5z" fill="#242424" stroke="#080808"/>
            <path d="M1833 955q9-16 17 3M1863 961q9-18 18 1M1896 964q8-17 15-1" fill="#757575" stroke="#111"/>
            <path d="M246 685h1674v257H246z" fill="url(#gTube)"/>
            <path d="M246 715h1674v105H246z" fill="url(#gShineY)" mask="url(#mShine)"/>
            <path d="M246 685.300h1674" stroke="#0b0f11" stroke-width="1.500"/>
            <path d="M246 942.600h1674" stroke="#111" stroke-width="1.400"/><path d="M694 943.500h1028" stroke="#777"/>
            <path d="M300 685v257M559.500 685v257M819 685v257M1597.500 685v257M1857 685v257" stroke="#050505" stroke-width="1.800"/>
            <path d="M246 656.500h1674" stroke="#f5a31a" stroke-width="5"/><path d="M246 656.500h1674" stroke="#c88a1c"/>
            <path d="M246 703h1674" stroke="#ff9a28" stroke-width="2"/>
            <path d="M1079 686h259v257h-259z" fill="none" stroke="#ffbd72" stroke-width="2"/>
            <g fill="none" stroke="#5d7080" stroke-width="3.600" opacity=".45"><path d="M1293 556l15-2M1325 554l15 2M1317 564l-10.500 27h21zM1317 592v56M1336.500 613.500h26v24h-26zM1336.500 642.500h26v8h-26z"/></g>
            <g fill="none" stroke="#f3f3f3" stroke-width="1.700"><circle cx="1317" cy="554" r="8"/><circle cx="1317" cy="656.500" r="8"/><path d="M1293 556l15-2M1325 554l15 2M1317 564l-10.500 27h21zM1317 592v64M1317 626l-10.500 8.700h21zM1336.500 613.500h26v24h-26zM1336.500 642.500h26v8h-26zM1385 646v20l29-9.700zM1422 649l2 7-2 8"/></g>
            <path d="M1325 656.500h86M1416 656.500q8-5 16 0-8 4-16 0z" fill="none" stroke="#ffbf4e" stroke-width="1.700"/>
            <g fill="#fff" opacity=".45"><path d="M1822.500 222h15l-7.500-10zM1822.500 352h15l-7.500 10zM1765 279.500v15l-10-7.500zM1895 279.500v15l10-7.500z"/><path d="M1809 220l1 5q-14 4-23 14l5 3-15.500 4 .5-16 4 4q10-10 28-14zM1852 220l-1 5q14 5 22 14l-4 4 15 3-1-16-4 3q-10-10-27-13z"/></g>
            <rect x="1800" y="258" width="59" height="59" rx="3" fill="#fff" opacity=".35"/>
            <rect x="1808" y="265" width="44" height="44" rx="11" fill="#fff"/>
            <g fill="#fff"><ellipse cx="1806.500" cy="263.500" rx="7" ry="4.200" transform="rotate(-45 1806.500 263.500)"/><ellipse cx="1853.500" cy="263.500" rx="7" ry="4.200" transform="rotate(45 1853.500 263.500)"/><ellipse cx="1806.500" cy="310.500" rx="7" ry="4.200" transform="rotate(45 1806.500 310.500)"/><ellipse cx="1853.500" cy="310.500" rx="7" ry="4.200" transform="rotate(-45 1853.500 310.500)"/></g>
            <path d="M1799.500 258.500V317.500" stroke="#1515c8" stroke-width="1.400"/><path d="M1799.500 317.500h59" stroke="#c8141e" stroke-width="1.400"/>
            <text x="1830" y="292" class="cubetext">Front</text><text x="1799.500" y="253.500" class="axis z">Z</text><text x="1868.500" y="322" class="axis xx">X</text>
            <rect x="1861" y="339" width="44" height="28" rx="2.500" fill="#fff" opacity=".35"/>
            <path d="M1875 344.500l8.500 2.500v11.500L1875 362l-8.700-3.500V347z" fill="#fff" stroke="#333" stroke-width="1.200"/><path d="M1866.500 347.300 1875 350v11.500l-8.500-3.300z" fill="#e6e6e6"/><path d="M1883.300 347.300 1875 350v11.500l8.300-3.300z" fill="#a8a8a8"/>
            <path d="M1892 351h8l-4 4.500z" fill="#222"/>
          </svg>
          <button class="feat"><svg viewBox="0 0 20 20"><path d="M8 3.500h10M8 8.500h10M8 13h10M8 18h10" stroke="#333" stroke-width="1.300"/><path d="M1 2l2.500 3L6 2" fill="none" stroke="#333" stroke-width="1.500"/><path d="M4.500 6.500v12" stroke="#999" stroke-width="1.600"/></svg></button>
          <div class="dock">
            <span><svg viewBox="0 0 20 20"><rect x="2" y="2" width="16" height="16" rx="2" fill="none" stroke="#222" stroke-width="1.300"/><path d="M5 6h9M7 9h9M7 12h9M7 15h9M6.500 6v9.500" stroke="#222" stroke-width="1.700"/></svg></span>
            <span><svg viewBox="0 0 20 20"><path d="M11 4.500l7 3v8L12 19.500 5 16V8zM5 8l7 3.500L18 7.500M12 11.500v8" fill="none" stroke="#333" stroke-width="1.200"/><path d="M1 1h9v8H1z" fill="#2b6cc4"/><path d="M4 1v8M7 1v8M1 3.700h9M1 6.300h9" stroke="#fff" stroke-width=".7"/></svg></span>
            <span><svg viewBox="0 0 20 20"><path d="M2 3h5v6H2z" fill="#bbb" stroke="#555"/><path d="M4 10v1.500h5" fill="none" stroke="#1651b0" stroke-width="1.300" stroke-dasharray="2 1"/><path d="M8 14l3-1v-3l3-1.500h4v10H9.500L8 17zM14 9v5l-4 1" fill="#fff" stroke="#555"/></svg></span>
            <span><svg viewBox="0 0 20 20"><path d="M2 11h16v7H2z" fill="#fff" stroke="#222" stroke-width="1.300"/><path d="M11 11V1.500h7V11" fill="none" stroke="#1651b0" stroke-width="1.200" stroke-dasharray="2 1"/><circle cx="14.500" cy="14.500" r="3" fill="#d9dff0" stroke="#1651b0" stroke-dasharray="2 1"/><circle cx="14.500" cy="14.500" r="1" fill="#333"/></svg></span>
            <span><svg viewBox="0 0 20 20"><path d="M3.500 5Q-.5 12 3 19M17 4q4 7 0 15" fill="none" stroke="#222" stroke-width="1.800"/><path d="M6 8q3-1 4 4t4 5" fill="none" stroke="#222" stroke-width="3"/><path d="M15 7.500Q11.500 9 10 12.500T5 17" fill="none" stroke="#222" stroke-width="2"/><path d="M1 1h9v8H1z" fill="#333"/><path d="M4 1v8M7 1v8M1 3.700h9M1 6.300h9" stroke="#fff" stroke-width=".7"/></svg></span>
          </div>
          <div class="measure">
            <svg class="m1" viewBox="0 0 18 18"><path d="M3 15 15 3" stroke="#222" stroke-width="1.300"/><circle cx="2.500" cy="15.500" r="1.400" fill="#fff" stroke="#2b6cc4"/><circle cx="15.500" cy="2.500" r="1.400" fill="#fff" stroke="#2b6cc4"/></svg>
            <span class="mlabel">Length:</span><b>190.5000</b><span class="unit">mm</span>
            <svg class="m2" viewBox="0 0 18 14"><path d="M1 7h8V4q0-3 3.500-3T16.500 4v9H1z" fill="#bbb" stroke="#333" stroke-width="1.400"/><circle cx="12.500" cy="4.500" r="1.800" fill="none" stroke="#333"/><path d="M4 13v-3M7 13v-3M10 13v-3M10 8h6" stroke="#333"/></svg>
            <svg class="m3" viewBox="0 0 20 14"><path d="M1 12.800q0-11.300 9-11.300t9 11.300zM6 10.500q0-4.500 4-4.500t4 4.500z" fill="none" stroke="#333" stroke-width="1.400"/><path d="M3 12Q3 4 10 4t7 8" fill="none" stroke="#333" stroke-dasharray="1 1.500"/></svg>
            <svg class="m4" viewBox="0 0 16 16"><path d="M2 2h12M8 1v12M3.500 2 1.500 9h4zM12.500 2l-2 7h4zM1 14h14" fill="none" stroke="#333" stroke-width="1.300"/></svg>
          </div>
        </section>
      </div>
      <footer class="doctabs">
        <span class="plus"><svg viewBox="0 0 14 14"><path d="M7 0v14M0 7h14" stroke="#666" stroke-width="2.600"/></svg></span>
        <span class="dt"><svg><use href="#tfold"/></svg>Drivetrain Parts</span>
        <span class="dt"><svg><use href="#tfold"/></svg>Parts for Outtake</span>
        <span class="dt"><svg><use href="#tfold"/></svg>Intake</span>
        <span class="dt on"><svg><use href="#asm"/></svg>Assembly 1</span>
        <span class="dt tight"><svg><use href="#studio"/></svg>Spacer For Intake Liftin...</span>
        <span class="dt tight"><svg><use href="#studio"/></svg>Guard For Intake Gears</span>
        <span class="dt"><svg><use href="#studio"/></svg>Part Studio 1</span>
      </footer>
    </div>
  </div>

  <div class="taskbar">
    <div class="apps">
      <span><svg viewBox="0 0 24 24"><path d="M.5.500h11v11H.5zM12.500.500h11v11h-11zM.5 12.500h11v11H.5zM12.500 12.500h11v11h-11z" fill="url(#gWin)"/></svg></span>
      <span><svg viewBox="0 0 24 24"><path d="M0 3q0-2 2-2h6l2 3h12q2 0 2 2v14H0z" fill="#e8a317"/><path d="M0 6h24v16H0z" fill="#ffcf4a"/><path d="M5 23v-5q0-3 3-3h8q3 0 3 3v5z" fill="#1277c4"/><path d="M8 20h8" stroke="#0a4c86" stroke-width="1.500"/></svg></span>
      <span><svg viewBox="0 0 24 24"><path d="M12 .5q11.500.5 11.500 11T12 22.500q-2 0-4-.6L4 23.500v-4Q.5 16.500.5 11.500.500 1 12 .5z" fill="url(#gMsg)"/><path d="M5.500 14.500l4.500-5 3.500 3 5-3-4.500 5-3.500-3z" fill="#fff" stroke="#fff"/></svg></span>
      <span class="active"><svg viewBox="0 0 24 24"><circle cx="12" cy="12" r="11.500" fill="#ffcd2e"/><path d="M12 12 2 6.300A11.500 11.500 0 0 1 22 6.500z" fill="#e33b2e"/><path d="M2 6.300A11.500 11.500 0 0 0 11 23.500L16.500 14 12 12 7 15z" fill="#2ba24c"/><circle cx="12" cy="12" r="5.800" fill="#fff"/><circle cx="12" cy="12" r="4.500" fill="#2c7be5"/></svg></span>
      <span><svg viewBox="0 0 24 24"><circle cx="12" cy="12" r="11.800" fill="#1ed760"/><path d="M5 8q8-2.500 14.500 1.500M5.500 12q7-2 12.500 1.300M6.500 15.800q5.500-1.500 10 1" fill="none" stroke="#111" stroke-width="2.200" stroke-linecap="round"/></svg></span>
      <span><svg viewBox="0 0 24 24"><circle cx="12" cy="12" r="11.800" fill="#5865f2"/><path d="M5 16q0-5 2.500-9 2-1 3-1l.5 1h2l.5-1q1 0 3 1Q19 11 19 16q-2 1.500-3.500 1.500l-1-1.500h-5l-1 1.500Q7 17.500 5 16z" fill="#fff"/><circle cx="9.500" cy="12.500" r="1.500" fill="#5865f2"/><circle cx="14.500" cy="12.500" r="1.500" fill="#5865f2"/></svg></span>
      <span><svg viewBox="0 0 24 24"><circle cx="12" cy="12" r="11.800" fill="#2c6bed"/><circle cx="12" cy="12" r="7.500" fill="none" stroke="#fff" stroke-width="1" stroke-dasharray="2 1"/><circle cx="12.200" cy="11.800" r="6" fill="#fff"/><path d="M6 18.500l1-4 3 3z" fill="#fff"/></svg></span>
      <span><svg viewBox="0 0 24 24"><path d="M2 1h20v22H2z" fill="#d5cdb8"/><path d="M4 3h16v18H4z" fill="#4d4a44"/><path d="M5.500 4h4v9h-4z" fill="#f25022"/><path d="M9.500 4h3v9h-3z" fill="#ffb900"/><path d="M12.500 4h3v9h-3z" fill="#3cbf4a"/><path d="M15.500 4h3v9h-3z" fill="#1e88e5"/><path d="M6 16h3v4H6zM10.500 16h3v4h-3zM15 16h3v4h-3z" fill="#c8bfa8"/></svg></span>
      <span><svg viewBox="0 0 24 24"><path d="M12 .8l10 5.700v11L12 23.200 2 17.500v-11z" fill="#0b0b0b" stroke="#ddd" stroke-width="1"/><g fill="none" stroke-width="2"><path d="M5 9q1.500-4.500 6-5.500" stroke="#f3a81c"/><path d="M13 3.500Q18 5 19.500 9.500" stroke="#e5c11d"/><path d="M19.500 11v5" stroke="#e93ad2"/><path d="M18 17.500q-3 3-6 3" stroke="#1677e8"/><path d="M11 20.500Q6 19 4.500 15" stroke="#2cc04c"/><path d="M4.500 14v-4" stroke="#7a2ce8"/></g><circle cx="12" cy="12.500" r="4" fill="none" stroke="#fff" stroke-width="1.500"/><path d="M12 7.500v5.500" stroke="#fff" stroke-width="1.800"/></svg></span>
      <span><svg viewBox="0 0 24 24"><path d="M9 1l10 15H2l7-15v14l13 4-14 4-5-7 5-4 7 5 3-6-10 4M2 22l6-2" fill="none" stroke="#c8102e" stroke-width="1.500"/></svg></span>
      <span><svg viewBox="0 0 24 24"><path d="M1.500 22.500 3 17A10.500 10.500 0 1 1 7.500 21z" fill="#1c1c1c" stroke="#25d366" stroke-width="2.200"/><path d="M7.500 7.500q1.500-2 2.500 0l.8 2-1 1.500q1.500 2.500 4 3.500l1.500-1.500 2.500 1.500q0 3-3.500 3Q7.500 15.500 7 9.500z" fill="#25d366"/></svg></span>
      <span><svg viewBox="0 0 24 24"><path d="M13 4.500Q13 1.500 15.500 0q1 3.500 4 6 4 4 3.500 8-1.500 9.500-11 9.500T1 14Q.500 8 4 3.500q.5 2 2 3Q9.500 4.500 13 4.500z" fill="url(#gFox)"/><path d="M7 9q5-1 6 1 4-1 3.500 4-1.500 4-5 4T6.500 14Q6 10 7 9z" fill="#7b3df0"/></svg></span>
      <span class="slack"><svg viewBox="0 0 24 24"><circle cx="12" cy="12" r="11.800" fill="#fff"/><g stroke-width="3" stroke-linecap="round"><path d="M10 5v5" stroke="#36c5f0"/><path d="M5 10h1.500" stroke="#36c5f0"/><path d="M14.500 10h4" stroke="#2eb67d"/><path d="M14.500 5v1" stroke="#2eb67d"/><path d="M14.500 14v5" stroke="#ecb22e"/><path d="M18 14.500h1" stroke="#ecb22e"/><path d="M5 14.500h5" stroke="#e01e5a"/><path d="M10 18.500v.5" stroke="#e01e5a"/></g></svg><b>3</b></span>
    </div>
    <div class="tray">
      <svg class="tc" viewBox="0 0 12 8"><path d="M1.500 7 6 2l4.500 5" fill="none" stroke="#fff" stroke-width="1.600"/></svg>
      <span class="lang">ENG</span>
      <svg class="tm" viewBox="0 0 18 18"><path d="M11 2H2v12h11M6 17h7M9 14v3M13 1.500h4v5h-4zM15 7v9" fill="none" stroke="#fff" stroke-width="1.300"/></svg>
      <svg class="ts" viewBox="0 0 16 16"><path d="M1.500 6v4h3L8 13V3L4.500 6z" fill="none" stroke="#fff" stroke-width="1.200"/><path d="M10 5.500q2 2.500 0 5" fill="none" stroke="#fff" stroke-width="1.200"/><path d="M12 3.500q3.500 4.500 0 9" fill="none" stroke="#777"/></svg>
      <span class="clock">3:56 PM<br>7/7/2024</span>
      <svg class="tb" viewBox="0 0 16 18"><path d="M8 2q5 0 5 6v3.500l1.500 2.500h-13L3 11.500V8q0-6 5-6zM6 14.500q2 3 4 0" fill="none" stroke="#fff" stroke-width="1.300"/></svg>
    </div>
  </div>
</div>
</body>
</html>
```
FILE: styles.css
```css
* { box-sizing: border-box; }
body { margin: 0; background: #1c1c1c; }
svg { display: block; flex: none; overflow: visible; }
.defs { position: absolute; width: 0; height: 0; }
.screen { width: 1920px; height: 1080px; overflow: hidden; display: flex; flex-direction: column; font-family: Roboto, sans-serif; color: #333; }

/* browser frame */
.chrome { height: 121px; flex: none; background: #333; border-bottom: 1px solid #5c5c5c; font-family: "Open Sans", sans-serif; color: #fff; }
.tabstrip { height: 46px; display: flex; align-items: center; padding: 0 18px 6px 15px; }
.caretdown { width: 10px; height: 10px; }
.favicon { width: 15px; height: 17px; margin-left: 23px; }
.tabtitle { width: 168px; margin-left: 9px; font-size: 12px; letter-spacing: -.3px; white-space: nowrap; overflow: hidden; -webkit-mask-image: linear-gradient(90deg, #000 148px, transparent 168px); mask-image: linear-gradient(90deg, #000 148px, transparent 168px); }
.x { width: 9px; height: 9px; margin-left: 11px; }
.newtab { width: 28px; height: 28px; margin-left: 17px; border-radius: 50%; background: #1a1a1a; display: grid; place-items: center; }
.newtab svg { width: 11px; height: 11px; }
.winbtns { margin-left: auto; display: flex; gap: 35px; }
.winbtns svg { width: 11px; height: 11px; }
.addressrow { height: 34px; display: flex; align-items: center; padding-left: 15px; }
.nav { width: 15px; height: 15px; margin-right: 21px; }
.nav + .nav + .nav { margin-right: 18px; }
.omnibox { width: 1662px; height: 34px; border-radius: 17px; background: #1a1a1a; display: flex; align-items: center; padding: 0 15px 0 5px; }
.site { width: 24px; height: 24px; border-radius: 50%; background: #353535; display: grid; place-items: center; }
.site svg { width: 14px; height: 14px; }
.url { margin-left: 8px; font-size: 13px; color: #8b8b8b; flex: 1; white-space: nowrap; letter-spacing: .135px; }
.url b { font-weight: 400; color: #fff; }
.key { width: 19px; height: 13px; margin-right: 14px; }
.bstar { width: 17px; height: 17px; }
.ext { width: 19px; height: 19px; margin-left: 18px; }
.vsep { width: 2px; height: 16px; background: #1b1b1b; }
.addressrow .vsep { margin-left: 15px; }
.profile { width: 20px; height: 20px; margin-left: 16px; border-radius: 50%; background: #455a64; font-size: 11px; display: grid; place-items: center; }
.kebab { width: 4px; height: 16px; margin-left: 25px; }
.bookmarks { height: 39px; display: grid; align-items: center; padding-left: 12px; grid-template-columns: 71px 17px 99px 151px 122px 147px 150px 145px 103px 147px 154px 153px 288px 30px 17px 110px; font-size: 12px; letter-spacing: -.28px; white-space: nowrap; }
.chip { width: 54px; height: 20px; border-radius: 5px; background: #54492c; color: #fdf0c4; display: grid; place-items: center; line-height: 18px; }
.bm { display: flex; align-items: center; gap: 6px; }
.bm em { font-style: normal; margin-left: 2px; }
.bm svg { width: 16px; height: 16px; }
.more { width: 12px; height: 10px; }

/* document header */
.docbar { height: 40px; flex: none; background: #fafafa; display: flex; align-items: center; padding-left: 4px; }
.logo { width: 21px; height: 22px; }
.brand { width: 70px; margin-left: 6px; font: 300 19px "Open Sans", sans-serif; color: #4d4d4d; letter-spacing: -.75px; margin-top: -3px; }
.burger { width: 16px; height: 15px; margin-left: 12px; }
h1 { margin: 1px 0 0 12px; width: 235px; font-size: 24px; line-height: 28px; font-weight: 600; letter-spacing: -.95px; white-space: nowrap; color: #2b2b2b; }
.branch { font-size: 16px; color: #999; margin-top: 5px; width: 45px; letter-spacing: -.1px; }
.link { width: 15px; height: 15px; }
.cap { width: 17px; height: 15px; margin: -2px 0 0 32px; }
.docright { margin-left: auto; height: 40px; display: flex; align-items: center; padding-right: 5px; }
.bell { position: relative; width: 17px; margin: 4px 14px 0 0; }
.bell svg { width: 17px; height: 20px; }
.bell b { position: absolute; left: 9px; top: -7px; width: 16px; height: 16px; border-radius: 2px; background: #1651b0; color: #fff; font: 700 11px/16px "Open Sans", sans-serif; text-align: center; }
.dico { width: 18px; height: 20px; margin: 3px 14px 0 0; color: #666; }
.share { width: 60px; height: 33px; margin-left: -3px; border: 0; border-radius: 4px; background: #1651b0; color: #fff; font: 500 15px Roboto, sans-serif; padding: 0; }
.help { width: 19px; height: 19px; margin: 2px 7px 0 11px; }
.caret { border: 4px solid transparent; border-top: 5px solid #333; border-bottom: 0; }
.avatar { width: 24px; height: 24px; margin: 1px 6px 0 12px; }
.user { font-size: 15px; width: 95px; white-space: nowrap; letter-spacing: -.35px; color: #444; }

/* workspace */
.work { height: 871px; flex: none; display: flex; }
.rail { width: 40px; background: #fafafa; border-right: 1px solid #ccc; border-top: 1px solid #ccc; display: flex; flex-direction: column; align-items: center; }
.r1 { width: 21px; height: 19px; margin: 8px 0 0 1px; }
.r2 { width: 20px; height: 19px; margin: 17px 0 0 3px; }
.r3 { width: 20px; height: 18px; margin: 14px 0 0 1px; }
.r4 { width: 20px; height: 20px; margin: 16px 0 0 1px; }
.rule { width: 39px; height: 1px; background: #ccc; margin-top: 9px; }
.r5 { width: 17px; height: 19px; margin: 8px 0 0 1px; color: #2b2b2b; }
.r6 { width: 19px; height: 17px; margin: auto 0 6px 1px; }
.main { width: 1880px; display: flex; flex-direction: column; background: #fff; }
.toolbar { height: 36px; display: flex; align-items: center; padding-left: 1px; }
.toolbar svg { width: 22px; height: 22px; margin: 0 6px; }
.toolbar > i { width: 2px; height: 26px; background: #d4d4d4; margin: 0 1px; }
.insert { width: 78px; display: flex; align-items: center; font-size: 14.500px; color: #333; }
.insert svg { margin: 0 3px 0 5px; }
.search { width: 160px; height: 32px; margin-left: 11px; background: #eee; border-radius: 3px; display: flex; align-items: center; padding-left: 10px; font-size: 14.500px; color: #444; white-space: nowrap; letter-spacing: -.2px; }
.search kbd { height: 18px; margin-top: 2px; border: 1px solid #999; border-bottom-width: 2px; border-radius: 2px; font: 11px/15px "Open Sans", sans-serif; padding: 0 3px; letter-spacing: -.2px; }
.search kbd:first-of-type { margin-left: 3px; width: 33px; padding: 0 2px; overflow: hidden; }
.search kbd:last-of-type { width: 17px; padding: 0 5px; }
.body { height: 805px; display: flex; }
.panel { width: 206px; height: 805px; border-top: 1px solid #ccc; border-right: 1px solid #ccc; overflow: hidden; display: flex; flex-direction: column; }
.filter { height: 39px; display: flex; align-items: center; padding: 5px 0 0 10px; }
.funnel { width: 17px; height: 17px; margin-top: 2px; }
.input { width: 122px; height: 30px; margin: 1px 14px 0 12px; border: 1px solid #999; border-radius: 3px; padding-left: 6px; font: italic 14px/28px Roboto, sans-serif; letter-spacing: -.1px; color: #757575; }
.flist { width: 14px; height: 14px; }
.insthead { height: 23px; display: flex; padding: 5px 11px 0 4px; justify-content: space-between; font-weight: 500; font-size: 14px; line-height: 16px; letter-spacing: -.38px; color: #2b2b2b; }
.insthead svg { width: 18px; height: 15px; }
.treewrap { height: 742px; display: flex; overflow: hidden; }
.tree { width: 183px; margin: 0; padding: 0; list-style: none; font-size: 14px; color: #4a4a4a; }
.tree li { height: 24px; margin: 1px 0 2px; display: flex; align-items: center; padding-left: 6px; white-space: nowrap; letter-spacing: -.33px; }
.tree li > svg { width: 17px; height: 17px; margin: 0 4px 0 -1px; }
.tree li b { width: 20px; }
.tree li b svg { width: 8px; height: 13px; }
.tree li .d { width: 8px; height: 18px; margin: -2px 0 0; }
.tree li .t { width: 16px; height: 14px; margin: -2px 8px 0 0; }
.tree .name { width: 73px; }
.tree .short { width: 49px; }
.tree .sel { background: #aeddf5; }
.scroll { width: 17px; margin-top: 5px; background: #f1f1f1; display: flex; flex-direction: column; align-items: center; }
.scroll .up { border: 4px solid transparent; border-bottom: 4px solid #505050; border-top: 0; margin-top: 7px; }
.scroll .thumb { width: 13px; height: 140px; margin-top: 209px; background: #c1c1c1; }
.scroll .down { border: 4px solid transparent; border-top: 4px solid #505050; border-bottom: 0; margin: auto 0 8px; }

/* model view with floating controls */
.view { position: relative; width: 1674px; height: 805px; overflow: hidden; background: #fff; }
.scene { width: 1674px; height: 805px; }
.cubetext { font: 14px Roboto, sans-serif; letter-spacing: -.2px; text-anchor: middle; fill: #222; }
.axis { font: 13px Roboto, sans-serif; text-anchor: middle; }
.z { fill: #1515c8; }
.xx { fill: #c8141e; }
.feat { position: absolute; left: -1px; top: 377px; width: 33px; height: 34px; border: 1px solid #bbb; background: #fff; padding: 7px; }
.feat svg { width: 19px; height: 19px; }
.dock { position: absolute; right: 0; top: 311px; width: 32px; border: 1px solid #999; border-right: 0; background: #fff; }
.dock span { display: grid; place-items: center; height: 33px; border-bottom: 1px solid #999; }
.dock span:last-child { border-bottom: 0; height: 32px; }
.dock svg { width: 20px; height: 20px; }
.measure { position: absolute; right: 0; bottom: 0; width: 280px; height: 30px; background: rgba(255, 255, 255, .72); display: flex; align-items: center; padding: 2px 0 0 4px; font-size: 14px; color: #777; }
.mlabel { width: 45px; letter-spacing: -.1px; }
.unit { width: 23px; letter-spacing: -.3px; }
.measure b { width: 60px; margin: 0 4px 0 2px; font: 700 12.300px/15px "Liberation Mono", monospace; letter-spacing: -.1px; color: #666; border-bottom: 1px solid #ccc; }
.m1 { width: 18px; height: 18px; margin-right: 10px; }
.m2 { width: 17px; height: 13px; margin-left: 15px; }
.m3 { width: 20px; height: 13px; margin-left: 17px; }
.m4 { width: 16px; height: 16px; margin-left: 17px; }

/* document tabs */
.doctabs { height: 30px; background: #d5d5d5; display: flex; }
.plus { width: 39px; padding: 7px 0 0 9px; }
.plus svg { width: 15px; height: 15px; }
.dt { width: 200px; height: 28px; margin-right: 2px; background: #eaeaea; border-radius: 0 0 5px 5px; border-bottom: 1px solid #bdbdbd; display: flex; align-items: center; gap: 4px; padding-left: 11px; font-size: 15px; letter-spacing: -.35px; color: #666; white-space: nowrap; }
.dt.tight { letter-spacing: -.5px; }
.dt svg { width: 18px; height: 17px; }
.dt.on { background: #fff; border-bottom: 2px solid #1651b0; color: #444; width: 198px; margin-right: 4px; padding-top: 1px; }

/* desktop taskbar */
.taskbar { height: 48px; flex: none; background: #1c1c1c; border-top: 1px solid #3a3a3a; display: flex; justify-content: space-between; color: #fff; font: 12px/16px "Open Sans", sans-serif; }
.apps { display: flex; padding-left: 11px; }
.apps span { width: 44px; height: 46px; display: grid; place-items: center; position: relative; }
.apps svg { width: 24px; height: 24px; }
.apps .active { width: 40px; height: 40px; margin: 3px 2px; background: #2b2b2b; border: 1px solid #353535; border-radius: 4px; }
.apps .active::after, .slack::after { content: ""; position: absolute; bottom: 0; left: 11px; width: 16px; height: 3px; border-radius: 2px; background: #4cc2ff; }
.apps .slack::after { left: 19px; bottom: 2px; width: 6px; background: #9a9a9a; }
.slack b { position: absolute; right: 7px; top: 6px; width: 13px; height: 13px; border-radius: 50%; background: #d81b4f; font: 10px/13px "Open Sans", sans-serif; text-align: center; }
.tray { display: flex; align-items: center; padding: 0 20px 2px 0; }
.tc { width: 12px; height: 8px; margin-right: 20px; }
.lang { width: 41px; letter-spacing: -.3px; }
.tm { width: 17px; height: 17px; margin-right: 8px; }
.ts { width: 16px; height: 16px; }
.clock { width: 66px; text-align: right; letter-spacing: -.35px; }
.tb { width: 16px; height: 18px; margin-left: 6px; }
```
